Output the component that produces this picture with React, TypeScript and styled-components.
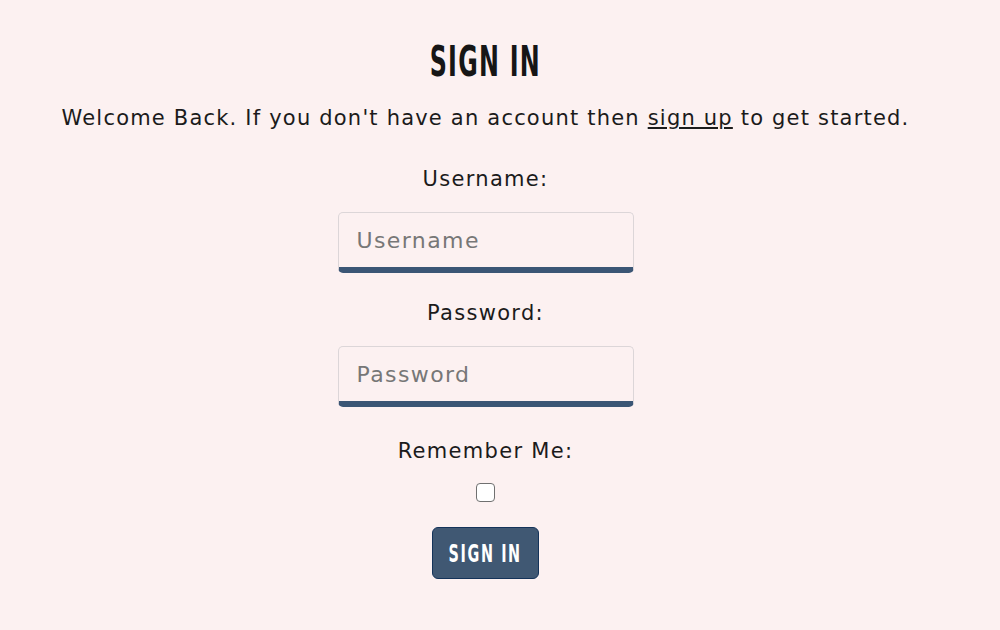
import React from "react";
import styled, { createGlobalStyle } from "styled-components";

const GlobalStyle = createGlobalStyle`
  html, body {
    margin: 0;
    padding: 0;
    background: #fcf1f1;
  }
  body {
    font-family: "DejaVu Sans", "Open Sans", sans-serif;
    color: #1b1b1b;
  }
`;

const Page = styled.main`
  display: flex;
  flex-direction: column;
  align-items: center;
  padding: 38px 29px 0 0;
  min-height: 630px;
  box-sizing: border-box;
`;

const Condensed = styled.span<{ $sx: number }>`
  display: inline-block;
  white-space: nowrap;
  font-family: "DejaVu Sans Condensed", "DejaVu Sans", sans-serif;
  font-weight: 700;
  transform: scale(${(p) => p.$sx}, 1);
`;

const Title = styled.h1`
  margin: 0;
  font-size: 42px;
  line-height: 48px;
  letter-spacing: 2px;
  color: #161616;
`;

const Intro = styled.p`
  margin: 17px 0 0;
  font-weight: 400;
  font-size: 21px;
  line-height: 30px;
  letter-spacing: 1.2px;
  a {
    color: inherit;
  }
`;

const Form = styled.form`
  display: flex;
  flex-direction: column;
  align-items: center;
  margin-top: 31px;
`;

const Label = styled.label<{ $gap?: number }>`
  font-weight: 400;
  font-size: 21px;
  line-height: 30px;
  letter-spacing: 1.3px;
  margin-top: ${(p) => p.$gap ?? 0}px;
`;

const Input = styled.input`
  margin-top: 18px;
  width: 296px;
  height: 61px;
  box-sizing: border-box;
  padding: 0 18px;
  background: #fcf1f1;
  border: 1px solid #dcd6d8;
  border-bottom: 6px solid #3b5675;
  border-radius: 5px;
  font-family: "DejaVu Sans", sans-serif;
  font-weight: 400;
  font-size: 22px;
  letter-spacing: 1.4px;
  color: #333;
  outline: none;
  &::placeholder {
    color: #777;
  }
`;

const Check = styled.input`
  margin: 17px 0 0;
  width: 19px;
  height: 19px;
  appearance: none;
  border: 1.5px solid #707070;
  border-radius: 4px;
  background: #fff;
`;

const Button = styled.button`
  margin-top: 25px;
  width: 107px;
  height: 52px;
  padding: 0;
  display: flex;
  align-items: center;
  justify-content: center;
  overflow: visible;
  background: #405873;
  border: 1px solid #14335a;
  border-radius: 6px;
  color: #fff;
  font-size: 25px;
  letter-spacing: 2.5px;
  cursor: pointer;
`;

export default function App() {
  return (
    <>
      <GlobalStyle />
      <Page>
        <Title>
          <Condensed $sx={0.63}>SIGN IN</Condensed>
        </Title>
        <Intro>
          Welcome Back. If you don't have an account then <a href="#">sign up</a> to get started.
        </Intro>
        <Form onSubmit={(e) => e.preventDefault()}>
          <Label htmlFor="username">Username:</Label>
          <Input id="username" placeholder="Username" />
          <Label htmlFor="password" $gap={25}>Password:</Label>
          <Input id="password" type="password" placeholder="Password" />
          <Label htmlFor="remember" $gap={29}>Remember Me:</Label>
          <Check id="remember" type="checkbox" />
          <Button type="submit">
            <Condensed $sx={0.64}>SIGN IN</Condensed>
          </Button>
        </Form>
      </Page>
    </>
  );
}
